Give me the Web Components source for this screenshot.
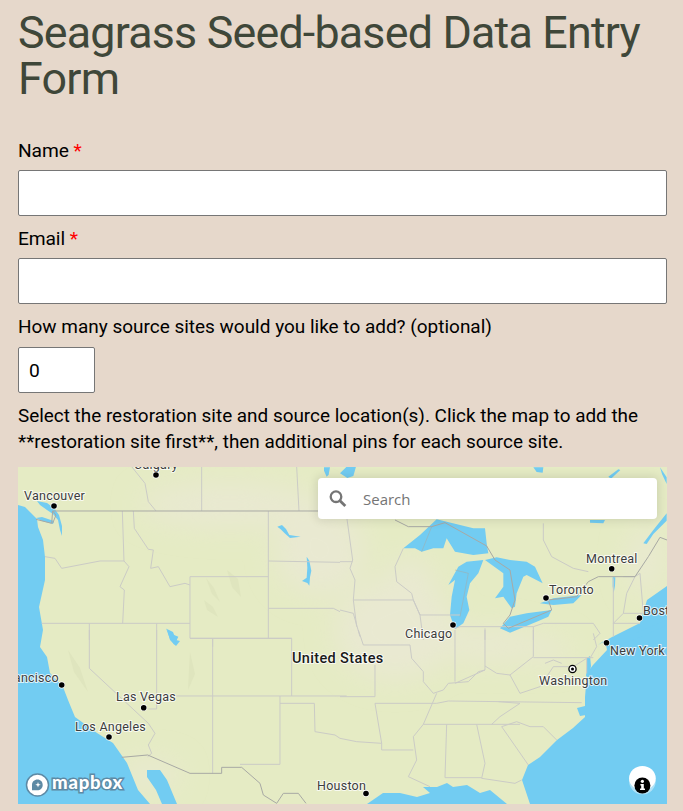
<!doctype html>
<html>
<head>
<meta charset="utf-8">
<title>Seagrass Seed-based Data Entry Form</title>
<style>
  html, body { margin: 0; background: #e6d8cb; }
  body { font-family: Roboto, sans-serif; height: 811px; overflow: hidden; }
</style>
</head>
<body>
<seed-form>
  <form-field label="Name" required></form-field>
  <form-field label="Email" required></form-field>
  <number-field label="How many source sites would you like to add? (optional)" value="0"></number-field>
  <p slot="hint">Select the restoration site and source location(s). Click the map to add the **restoration site first**, then additional pins for each source site.</p>
  <site-map slot="map"></site-map>
</seed-form>

<script>
const formTemplate = document.createElement('template');
formTemplate.innerHTML = `
  <style>
    :host { display: block; padding: 0 16px 0 18px; color: #000; }
    h1 { margin: 0; padding-top: 10px; font: 400 44.8px/46px Roboto, sans-serif; letter-spacing: -.8px; color: #3f4739; }
    .fields { display: flex; flex-direction: column; margin-top: 35px; }
    ::slotted(p) { margin: 10px 0 12px; font: 400 18.9px/26px Roboto, sans-serif; }
  </style>
  <h1>Seagrass Seed-based Data Entry Form</h1>
  <div class="fields"><slot></slot></div>
  <slot name="hint"></slot>
  <slot name="map"></slot>
`;

class SeedForm extends HTMLElement {
  constructor() {
    super();
    this.attachShadow({ mode: 'open' }).appendChild(formTemplate.content.cloneNode(true));
  }
}

class FormField extends HTMLElement {
  constructor() {
    super();
    const star = this.hasAttribute('required') ? ' <span>*</span>' : '';
    this.attachShadow({ mode: 'open' }).innerHTML = `
      <style>
        :host { display: block; margin-bottom: 9px; }
        label { display: block; font: 400 19.2px/28px Roboto, sans-serif; letter-spacing: -.1px; margin-bottom: 5px; }
        span { color: #f00; }
        input { display: block; box-sizing: border-box; width: 100%; height: 46px; margin: 0; padding: 10px;
          background: #fff; border: 1px solid #767676; border-radius: 2px; font: 400 19px Roboto, sans-serif; }
      </style>
      <label>${this.getAttribute('label')}${star}</label>
      <input type="text">
    `;
  }
}

class NumberField extends HTMLElement {
  constructor() {
    super();
    this.attachShadow({ mode: 'open' }).innerHTML = `
      <style>
        :host { display: block; }
        label { display: block; font: 400 18.98px/28px Roboto, sans-serif; margin-bottom: 6px; }
        input { display: block; box-sizing: border-box; width: 77px; height: 46px; margin: 0; padding: 10px;
          background: #fff; border: 1px solid #767676; border-radius: 2px; font: 400 19.2px Roboto, sans-serif; }
      </style>
      <label>${this.getAttribute('label')}</label>
      <input type="text" value="${this.getAttribute('value')}">
    `;
  }
}

class MapSearch extends HTMLElement {
  constructor() {
    super();
    this.attachShadow({ mode: 'open' }).innerHTML = `
      <style>
        :host { position: absolute; top: 11px; right: 10px; width: 339px; height: 41px; display: flex; align-items: center;
          background: #fff; border-radius: 4px; box-shadow: 0 0 10px 2px rgba(0,0,0,.1); color: #757575;
          font: 400 15px "Open Sans", sans-serif; }
        svg { width: 23px; height: 23px; margin-left: 8px; }
        span { margin-left: 14px; }
      </style>
      <svg viewBox="0 0 23 23" fill="none" stroke="#757575"><circle cx="10" cy="9.700" r="5.300" stroke-width="2.300"/><path d="M14 13.700l5.300 5.300" stroke-width="2.800"/></svg>
      <span>Search</span>
    `;
  }
}

const MAP_SVG = `
<svg viewBox="18 467 649 337" width="649" height="337" xmlns="http://www.w3.org/2000/svg">
  <defs><filter id="soft" x="-40%" y="-40%" width="180%" height="180%"><feGaussianBlur stdDeviation="14"/></filter></defs>
  <rect x="18" y="467" width="649" height="337" fill="#e5ebc4"/>
  <g filter="url(#soft)" fill="#e9e9d1">
    <ellipse cx="230" cy="505" rx="90" ry="22"/><ellipse cx="320" cy="550" rx="45" ry="45"/>
    <ellipse cx="395" cy="630" rx="60" ry="50"/><ellipse cx="490" cy="645" rx="50" ry="16"/>
    <ellipse cx="410" cy="585" rx="24" ry="28"/><ellipse cx="645" cy="560" rx="16" ry="34"/>
    <ellipse cx="545" cy="650" rx="24" ry="12"/><ellipse cx="150" cy="775" rx="30" ry="14"/>
  </g>
  <g fill="#dfe5be">
    <path d="M206 578l8 10 6 14-8-8zM227 570l11 9 3 18-9-10zM204 600l9 7 5 10-11-7z"/>
    <path d="M68 650l12 18 8 24-14-20zM190 652l5 22-7 16 1-22z"/>
  </g>

  <g fill="#72ccf2" stroke="none">
    <!-- pacific -->
    <path d="M18 505L25 507 31 513 37 519 38 527 43 540 45 557 45 580 39 607 43 630 40 647 47 657 50 673 63 687 68 700 75 717 97 733 113 743 127 763 138 790 150 804H18Z"/>
    <path d="M147 770L160 770 167 780 177 804H162L156 790 147 777Z"/>
    <path d="M37 501L47 503 54 508 59 515 62 526 62 536 60 530 58 520 53 514 47 510 40 505ZM36 518L42 517 54 521 53 524 42 521Z"/>
    <path d="M167 629l6 3 3 8 4 1-4 5-6-6z"/>
    <!-- atlantic and gulf -->
    <path d="M667 586L647 600 640 623 612 637 598 645 605 640 607 650 593 665 587 673 585 697 585 717 573 728 557 740 540 757 528 765 522 780 530 804H507L490 790 480 793 467 785 453 787 447 783 437 787 423 787 430 793 417 797 400 793 383 793 367 804H667Z"/>
    <path d="M612 641l24-8 31-13v5l-24 11-26 10z"/>
    <path d="M587 658l3-2 1 10-2 11-3-1 1-9zM577 708l8-2 1 9-6 1z"/>
    <!-- lakes -->
    <g transform="translate(340 460) scale(.33333)">
      <path d="M190 265L240 225 290 178 400 205 435 205 440 250 445 280 400 285 345 275 320 235 310 265 280 265 245 275 225 265Z"/>
      <path d="M325 375L355 320 380 305 430 300 415 340 390 370 380 410 388 450 370 490 345 508 330 465 335 410 345 360Z"/>
      <path d="M435 300L470 292 510 300 560 305 585 320 608 370 560 345 550 350 530 400 525 440 515 445 490 410 465 415 490 380 490 340Z"/>
      <path d="M480 505L510 470 560 460 635 450 625 470 590 485 510 518Z"/>
      <path d="M600 430L640 415 725 405 700 430 640 435Z"/>
      <path d="M818 352l8 0-1 25-4 22-3-20zM910 250l30-40 40-50v22l-40 40-20 30zM805 50l30-22 6 2-28 26zM750 180l45 0-5 10-40-2zM580 22h30l-2 16-18-2zM960 22l20 30v20l-14-30z"/>
      <path d="M0 40l20-20 28 0-8 28-18 6z"/>
    </g>
    <g transform="translate(0 460) scale(.33333)">
      <path d="M832 200l14-5 12 12 10 18 34 5-32 4-16-14-12-12zM920 290l8 12 6 30-4 20-2 25-6-8-16-6 14-10 2-30zM498 505l12 15 25 10-12 25-14-20z"/>
      <path d="M972 22h18l-4 22-6 6-8-18z"/>
    </g>
  </g>

  <g fill="none" stroke="#cbcbc6" stroke-width="1">
    <g transform="translate(0 460) scale(.33333)">
      <path vector-effect="non-scaling-stroke" d="M395 20L435 70 445 125 468 153M605 20V153M890 20L897 153"/>
      <path vector-effect="non-scaling-stroke" d="M135 290L165 295 185 325 300 303 372 303M367 153L372 303 387 320 360 380 373 390 368 490"/>
      <path vector-effect="non-scaling-stroke" d="M400 153L403 205 445 268 460 270 452 325 475 320 510 380 555 370 570 375"/>
      <path vector-effect="non-scaling-stroke" d="M805 153V535M570 350H805M570 350V535H875M805 303L1020 307M805 445H1000L1020 455"/>
      <path vector-effect="non-scaling-stroke" d="M125 490H570M268 490V540M470 490V540M638 535V560"/>
    </g>
    <g transform="translate(0 630) scale(.33333)">
      <path vector-effect="non-scaling-stroke" d="M268 0V115L445 280 465 310 445 345 455 370 443 380"/>
      <path vector-effect="non-scaling-stroke" d="M470 0V237H445M520 198H1040M638 25V430M570 25H875V198M840 198V403H720M840 220H943L945 305 1005 315 1020 325"/>
    </g>
    <g transform="translate(340 630) scale(.33333)">
      <path vector-effect="non-scaling-stroke" d="M55 0L70 45H210L215 85 250 125 250 155 280 190 310 180 325 160 385 155 415 125 435 120 435 0M345 0V155M435 108L470 130 510 135 540 190 600 170 640 110 700 110 740 85M510 135L580 80V0M580 83H760"/>
      <path vector-effect="non-scaling-stroke" d="M0 200H105V105M105 220L125 340V360H220M105 220H290L325 213 725 218M290 190L250 283 220 320 230 390 205 440 270 470M250 283H540M320 283L315 443M410 283L435 400 425 445 525 460 545 450M315 443H425M485 290L565 405M485 290L530 275 570 290 610 290 650 330M455 283L480 260 540 220 475 215M0 325L50 335 125 340M435 120L345 160"/>
      <path vector-effect="non-scaling-stroke" d="M740 85V130M615 100L640 90 665 100M760 10L770 50 750 85"/>
    </g>
    <g transform="translate(340 460) scale(.33333)">
      <path vector-effect="non-scaling-stroke" d="M20 170L38 300 30 325 45 360 40 420 50 500M0 305H38M40 420H220L240 465H360M0 450L40 460 60 530M165 320L190 265M165 320L170 365 215 400 220 420 240 465 250 540M345 505L360 500H580V540M435 505V540M580 500L610 490H760L780 520 760 540M610 190V240L635 290 700 325 745 335M820 355L820 530M850 350L885 350 900 340 910 460H850L820 490H900M850 460L860 400 885 350"/>
    </g>
  </g>
  <g fill="none" stroke="#a8a9a4" stroke-width="1">
    <g transform="translate(0 460) scale(.33333)">
      <path vector-effect="non-scaling-stroke" d="M108 178L155 190 158 153H960M158 153L168 165 158 190"/>
    </g>
    <g transform="translate(340 460) scale(.33333)">
      <path vector-effect="non-scaling-stroke" d="M165 180L205 200 275 200 315 188 440 258 465 300 510 330 525 420 510 465 490 490 505 505 635 450 625 420 710 410 745 365 775 350 885 350 925 290 960 232 981 240"/>
      <path vector-effect="non-scaling-stroke" stroke-opacity=".5" d="M275 200L245 275M345 330L385 340 360 470"/>
    </g>
    <g transform="translate(0 630) scale(.33333)">
      <path vector-effect="non-scaling-stroke" d="M365 382L443 375 570 430H665V412H725L780 460 790 495 830 520 850 490H895L918 520"/>
    </g>
  </g>

  <g font-family="Roboto, sans-serif" font-size="12.5" fill="#3d3d3d" stroke="#fff" stroke-opacity=".75" stroke-width="2" paint-order="stroke" letter-spacing=".25">
    <text x="156" y="469" text-anchor="middle">Calgary</text>
    <text x="24" y="500">Vancouver</text>
    <text x="586" y="563">Montreal</text>
    <text x="549" y="594">Toronto</text>
    <text x="643" y="615">Boston</text>
    <text x="405" y="638">Chicago</text>
    <text x="610" y="655">New York</text>
    <text x="539" y="685">Washington</text>
    <text x="59" y="682" text-anchor="end">San Francisco</text>
    <text x="116" y="701">Las Vegas</text>
    <text x="75" y="731">Los Angeles</text>
    <text x="317" y="790">Houston</text>
    <text x="292" y="663" font-size="14.5" font-weight="500" fill="#1a1a1a" letter-spacing=".35">United States</text>
  </g>
  <g fill="#000" stroke="#fff" stroke-width="1.2" paint-order="stroke">
    <circle cx="156" cy="475" r="2.8"/><circle cx="54" cy="506" r="2.8"/><circle cx="611.7" cy="568.7" r="2.8"/>
    <circle cx="546" cy="598" r="2.8"/><circle cx="639.5" cy="618" r="2.8"/><circle cx="453" cy="625" r="2.8"/>
    <circle cx="606.5" cy="642.7" r="2.8"/><circle cx="61.7" cy="685" r="2.8"/><circle cx="143.7" cy="707.7" r="2.8"/>
    <circle cx="109" cy="737" r="2.8"/><circle cx="366" cy="793.5" r="2.8"/>
  </g>
  <circle cx="572.5" cy="669" r="3.6" fill="#fff" stroke="#000" stroke-width="1.3"/><circle cx="572.5" cy="669" r="1.5" fill="#000"/>
</svg>`;

class MapLogo extends HTMLElement {
  constructor() {
    super();
    this.attachShadow({ mode: 'open' }).innerHTML = `
      <style>
        :host { position: absolute; left: 8px; bottom: 6px; display: block; width: 100px; height: 26px; }
        svg { display: block; overflow: visible; }
        text { font: 900 18.5px Lato, sans-serif; letter-spacing: .8px; fill: #fff; stroke: #5d8aa5; stroke-width: 3px; paint-order: stroke; }
      </style>
      <svg width="100" height="26" viewBox="0 0 100 26">
        <circle cx="11.500" cy="13" r="11" fill="#fff" stroke="#5d8aa5" stroke-width="1.500"/>
        <path d="M11.500 7.500c3 0 5.200 2.400 5.200 5.400 0 3.200-2.600 5.400-5.200 5.400H6v-5.400c0-3 2.400-5.400 5.500-5.400z" fill="#5d8aa5"/>
        <path d="M12 10l.7 2 2 .7-2 .7-.7 2-.7-2-2-.7 2-.7z" fill="#fff"/>
        <text x="26" y="17">mapbox</text>
      </svg>
    `;
  }
}

class MapInfo extends HTMLElement {
  constructor() {
    super();
    this.attachShadow({ mode: 'open' }).innerHTML = `
      <style>
        :host { position: absolute; right: 11px; bottom: 5px; display: block; width: 27px; height: 33px; }
        svg { display: block; }
      </style>
      <svg width="27" height="33" viewBox="0 0 27 33">
        <circle cx="13.400" cy="15" r="13.300" fill="#fff" fill-opacity=".45"/>
        <ellipse cx="13.400" cy="12.200" rx="13.300" ry="12.200" fill="#fff"/>
        <circle cx="13.400" cy="19.500" r="8" fill="#000"/>
        <circle cx="13.400" cy="15.300" r="1.600" fill="#fff"/>
        <path d="M11.400 18h3.400v4.500h1.200v1.500h-5v-1.500h1.200v-3h-.8z" fill="#fff"/>
      </svg>
    `;
  }
}

class SiteMap extends HTMLElement {
  constructor() {
    super();
    this.attachShadow({ mode: 'open' }).innerHTML = `
      <style>
        :host { display: block; position: relative; height: 337px; overflow: hidden; }
        svg { display: block; }
      </style>
      ${MAP_SVG}
      <map-search></map-search>
      <map-logo></map-logo>
      <map-info></map-info>
    `;
  }
}

customElements.define('map-search', MapSearch);
customElements.define('map-logo', MapLogo);
customElements.define('map-info', MapInfo);
customElements.define('site-map', SiteMap);
customElements.define('form-field', FormField);
customElements.define('number-field', NumberField);
customElements.define('seed-form', SeedForm);
</script>
</body>
</html>
